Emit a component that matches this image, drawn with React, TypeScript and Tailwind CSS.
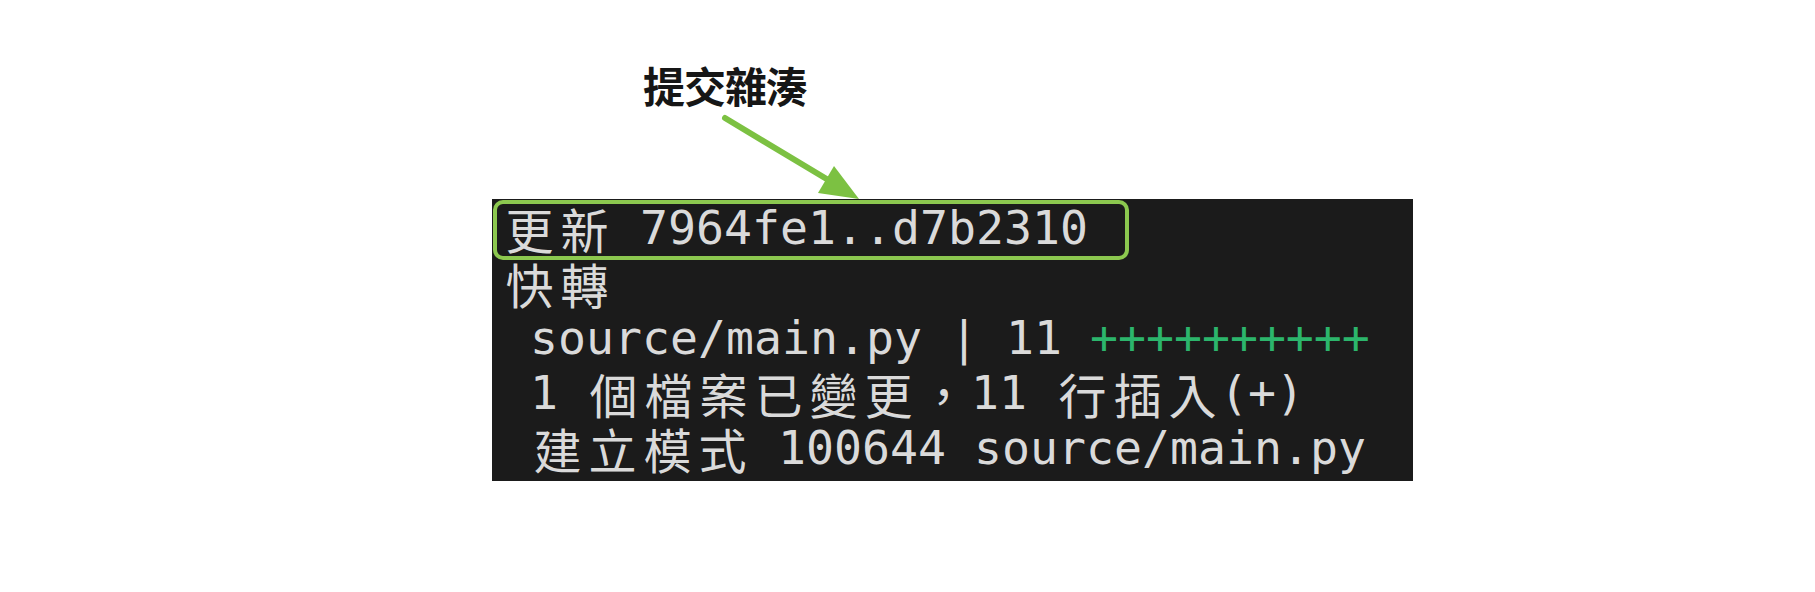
import React from "react";

const CJK = /[\u3000-\u9fff\uff00-\uffef]/;

function TermLine({ text, children }: { text: string; children?: React.ReactNode }) {
  const parts: React.ReactNode[] = [];
  let buf = "";
  text.split("").forEach((ch, i) => {
    if (CJK.test(ch)) {
      if (buf) {
        parts.push(buf);
        buf = "";
      }
      parts.push(
        <span
          key={i}
          className="inline-block align-top w-[55px] h-[55px] leading-[55px] text-center text-[48px] font-['Noto_Sans_CJK_TC','Noto_Sans_CJK_SC',sans-serif]"
        >
          {ch}
        </span>
      );
    } else {
      buf += ch;
    }
  });
  if (buf) parts.push(buf);

  return (
    <div className="h-[55px] leading-[55px] whitespace-pre">
      {parts}
      {children}
    </div>
  );
}

export default function App() {
  return (
    <div className="relative w-[1815px] h-[592px] bg-white overflow-hidden">
      {/* Label */}
      <div className="pt-[64px] pl-[643px] h-[199px]">
        <h1 className="text-[42px] leading-[42px] font-bold text-[#161616] font-['Noto_Sans_CJK_TC','Noto_Sans_CJK_SC',sans-serif] tracking-[-1px]">
          提交雜湊
        </h1>
      </div>

      {/* Terminal output */}
      <div className="relative ml-[492px] w-[921px] h-[282px] bg-[#1b1b1b] pl-[10px] pt-[2px] text-[46.5px] text-[#dadada] font-['DejaVu_Sans_Mono','Liberation_Mono',monospace]">
        <TermLine text="更新 7964fe1..d7b2310" />
        <TermLine text="快轉" />
        <TermLine text=" source/main.py | 11 ">
          <span className="text-[#2cb56c]">++++++++++</span>
        </TermLine>
        <TermLine text=" 1 個檔案已變更，11 行插入(+)" />
        <TermLine text=" 建立模式 100644 source/main.py" />

        {/* Highlight box */}
        <div className="absolute left-[1px] top-[1px] w-[636px] h-[60px] border-[4px] border-[#8cc84f] rounded-[10px]" />
      </div>

      {/* Arrow */}
      <svg
        className="absolute left-0 top-0 pointer-events-none"
        width="1815"
        height="592"
        viewBox="0 0 1815 592"
      >
        <line x1="725" y1="118" x2="830" y2="181" stroke="#7cc142" strokeWidth="6" strokeLinecap="round" />
        <polygon points="859,199 834,166 818,193" fill="#7cc142" />
      </svg>
    </div>
  );
}
